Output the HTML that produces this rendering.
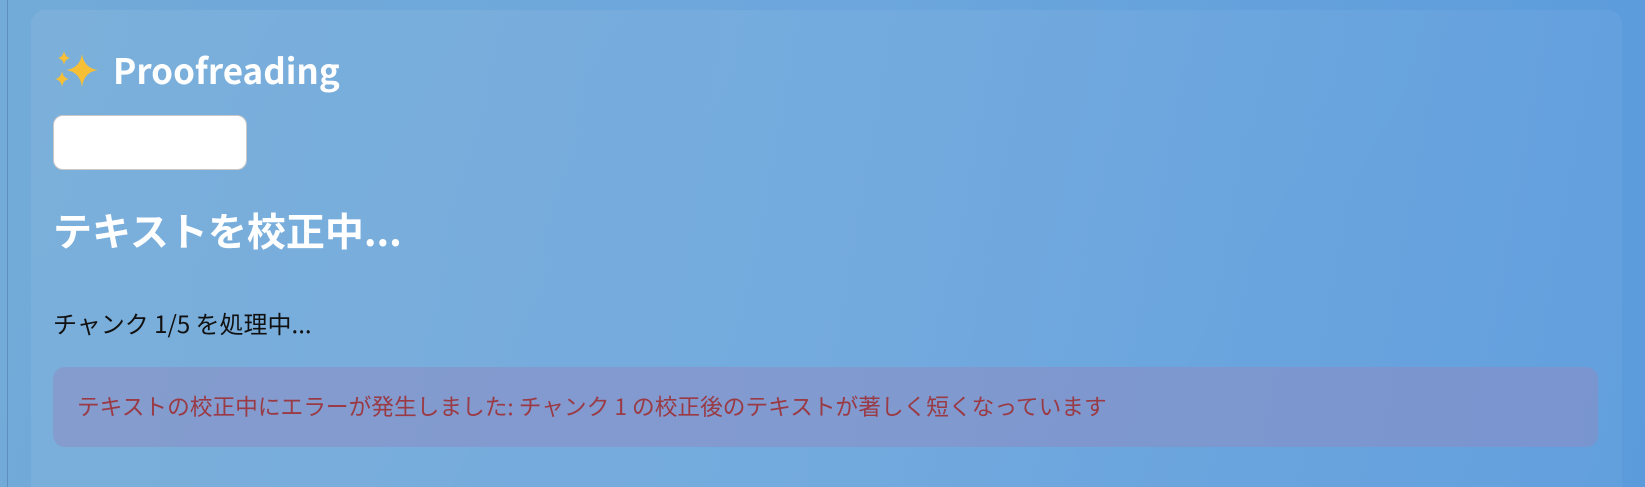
<!DOCTYPE html>
<html><head><meta charset="utf-8"><style>
html,body{margin:0;padding:0;width:1645px;height:487px;overflow:hidden;}
body{background:linear-gradient(100deg,#72aad8 0%,#6ca6dc 50%,#5b9bdc 100%);font-family:"Liberation Sans","Noto Sans CJK JP",sans-serif;position:relative;}
.edge{position:absolute;left:7px;top:0;width:1px;height:487px;background:#5f8fbf;}
.card{position:absolute;left:31px;top:10px;width:1591px;height:500px;border-radius:14px;background:linear-gradient(120deg,rgba(255,255,255,0.07),rgba(255,255,255,0.04));}
.title{position:absolute;left:57px;top:44px;font-size:35px;font-weight:bold;color:#fff;font-family:"Noto Sans CJK JP",sans-serif;display:flex;align-items:center;}
.input{position:absolute;left:53px;top:115px;width:194px;height:55px;background:#fff;border:1px solid #c8c8c8;border-radius:10px;box-sizing:border-box;}
h2{position:absolute;left:53px;top:200px;margin:0;font-size:39px;font-weight:bold;color:#fff;font-family:"Noto Sans CJK JP",sans-serif;line-height:60px;}
.st{position:absolute;left:53px;top:305px;font-size:24px;color:#111;font-family:"Noto Sans CJK JP",sans-serif;line-height:36px;}
.err{position:absolute;left:53px;top:367px;width:1545px;height:80px;border-radius:12px;background:rgba(140,140,195,0.55);}
.err span{position:absolute;left:24px;top:22px;font-size:22.7px;color:#9a3a45;font-family:"Noto Sans CJK JP",sans-serif;line-height:34px;white-space:nowrap;}
</style></head><body>
<div class="edge"></div>
<div class="card"></div>
<div class="title"><svg width="46" height="40" viewBox="0 0 46 40" style="margin-right:12px;margin-left:-2px"><path d="M27 4 Q29 18 43 20 Q29 22 27 37 Q25 22 11 20 Q25 18 27 4Z" fill="#f7bf35"/><path d="M9 1 Q10 7 15 8 Q10 9 9 15 Q8 9 3 8 Q8 7 9 1Z" fill="#f7bf35"/><path d="M7 21 Q8 28 14 29 Q8 30 7 37 Q6 30 0 29 Q6 28 7 21Z" fill="#f7bf35"/></svg>Proofreading</div>
<div class="input"></div>
<h2>テキストを校正中...</h2>
<div class="st">チャンク 1/5 を処理中...</div>
<div class="err"><span>テキストの校正中にエラーが発生しました: チャンク 1 の校正後のテキストが著しく短くなっています</span></div>
</body></html>
